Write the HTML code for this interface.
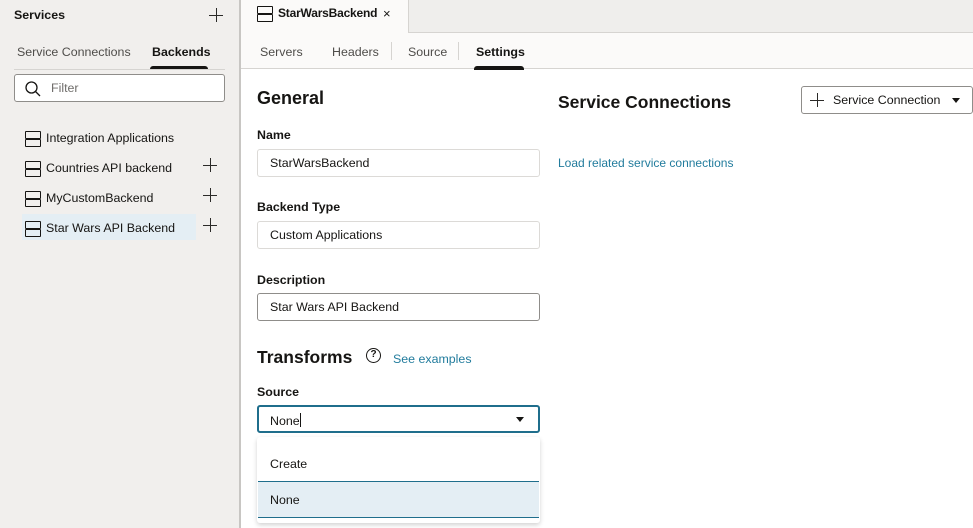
<!DOCTYPE html>
<html><head><meta charset="utf-8"><style>
*{box-sizing:border-box;margin:0;padding:0}
body{width:973px;height:528px;overflow:hidden;background:#fff;font-family:"Liberation Sans",sans-serif;color:#161513;font-size:12.4px;position:relative}
.a{position:absolute;white-space:nowrap}
.ic{position:absolute;width:14px;height:14px}
.ic:before,.ic:after{content:"";position:absolute;left:0;width:14px;height:6px;border:1.5px solid #161513;border-radius:1px}
.ic:before{top:0}.ic:after{top:8px}
.plus{position:absolute;width:14px;height:14px}
.plus:before{content:"";position:absolute;left:6.5px;top:0;width:1.2px;height:14px;background:#2b2a28}
.plus:after{content:"";position:absolute;left:0;top:6.5px;width:14px;height:1.2px;background:#2b2a28}
.lbl{font-weight:bold;font-size:12.4px}
.fld{position:absolute;left:257px;width:283px;height:28px;border:1px solid #dcdad7;border-radius:3px;padding:6px 12px;font-size:12.4px}
</style></head><body>
<div class="a" style="left:0;top:0;width:239px;height:528px;background:#f1efed"></div>
<div class="a" style="left:239px;top:0;width:2px;height:528px;background:#c8c6c3"></div>
<div class="a" style="left:14px;top:8px;font-weight:bold">Services</div>
<div class="plus" style="left:209px;top:8px"></div>
<div class="a" style="left:17px;top:45px;color:#4f4d4a">Service Connections</div>
<div class="a" style="left:152px;top:45px;font-weight:bold">Backends</div>
<div class="a" style="left:150px;top:66px;width:58px;height:4px;background:#161513;border-radius:3px 3px 0 0"></div>
<div class="a" style="left:14px;top:69px;width:211px;height:1px;background:#d6d4d1"></div>
<div class="a" style="left:14px;top:74px;width:211px;height:28px;background:#fff;border:1px solid #8f8d8a;border-radius:3px"></div>
<svg class="a" style="left:24px;top:80px" width="18" height="18" viewBox="0 0 18 18"><circle cx="7.5" cy="7.5" r="5.5" fill="none" stroke="#161513" stroke-width="1.3"/><line x1="11.5" y1="11.5" x2="16" y2="16" stroke="#161513" stroke-width="1.3"/></svg>
<div class="a" style="left:51px;top:81px;color:#6f6d6a">Filter</div>
<div class="a" style="left:22px;top:214px;width:174px;height:26px;background:#e4eef4"></div>
<div class="ic" style="left:25px;top:131px"></div><div class="a" style="left:46px;top:131px">Integration Applications</div>
<div class="ic" style="left:25px;top:161px"></div><div class="a" style="left:46px;top:161px">Countries API backend</div>
<div class="ic" style="left:25px;top:191px"></div><div class="a" style="left:46px;top:191px">MyCustomBackend</div>
<div class="ic" style="left:25px;top:221px"></div><div class="a" style="left:46px;top:221px">Star Wars API Backend</div>
<div class="plus" style="left:203px;top:158px"></div>
<div class="plus" style="left:203px;top:188px"></div>
<div class="plus" style="left:203px;top:218px"></div>
<div class="a" style="left:241px;top:0;width:732px;height:33px;background:#efeeec"></div>
<div class="a" style="left:241px;top:32px;width:732px;height:1px;background:#d6d4d1"></div>
<div class="a" style="left:241px;top:0;width:168px;height:33px;background:#fbfaf9;border-right:1px solid #d6d4d1"></div>
<div class="ic" style="left:257px;top:6px"></div>
<div class="a" style="left:278px;top:6px;font-weight:bold;font-size:12px;letter-spacing:-0.2px">StarWarsBackend</div>
<div class="a" style="left:383px;top:6px;font-size:13px">×</div>
<div class="a" style="left:241px;top:33px;width:732px;height:36px;background:#fbfaf9;border-bottom:1px solid #d6d4d1"></div>
<div class="a" style="left:260px;top:45px;color:#4f4d4a">Servers</div>
<div class="a" style="left:332px;top:45px;color:#4f4d4a">Headers</div>
<div class="a" style="left:391px;top:42px;width:1px;height:18px;background:#d6d4d1"></div>
<div class="a" style="left:408px;top:45px;color:#4f4d4a">Source</div>
<div class="a" style="left:458px;top:42px;width:1px;height:18px;background:#d6d4d1"></div>
<div class="a" style="left:476px;top:45px;font-weight:bold">Settings</div>
<div class="a" style="left:474px;top:66px;width:50px;height:4px;background:#161513;border-radius:3px 3px 0 0"></div>
<div class="a" style="left:257px;top:88px;font-size:18px;font-weight:bold">General</div>
<div class="a lbl" style="left:257px;top:128px">Name</div>
<div class="fld" style="top:149px">StarWarsBackend</div>
<div class="a lbl" style="left:257px;top:200px">Backend Type</div>
<div class="fld" style="top:221px">Custom Applications</div>
<div class="a lbl" style="left:257px;top:273px">Description</div>
<div class="fld" style="top:293px;border-color:#8f8d8a">Star Wars API Backend</div>
<div class="a" style="left:257px;top:347px;font-size:17.5px;font-weight:bold">Transforms</div>
<div class="a" style="left:366px;top:348px;width:15px;height:15px;border:1.4px solid #161513;border-radius:50%;font-size:10px;font-weight:bold;text-align:center;line-height:12px">?</div>
<div class="a" style="left:393px;top:352px;color:#227c9d">See examples</div>
<div class="a lbl" style="left:257px;top:385px">Source</div>
<div class="a" style="left:257px;top:405px;width:283px;height:28px;border:2px solid #1f6e8c;border-radius:3px;padding:6px 11px">None<span style="display:inline-block;width:1px;height:14px;background:#161513;vertical-align:-2px"></span></div>
<div class="a" style="left:516px;top:417px;width:0;height:0;border-left:4px solid transparent;border-right:4px solid transparent;border-top:5px solid #161513"></div>
<div class="a" style="left:257px;top:437px;width:283px;height:86px;background:#fff;border-radius:3px;box-shadow:0 2px 5px rgba(0,0,0,.18)"></div>
<div class="a" style="left:270px;top:457px">Create</div>
<div class="a" style="left:258px;top:481px;width:281px;height:37px;background:#e4eef4;border-top:1px solid #1f6e8c;border-bottom:1px solid #1f6e8c"></div>
<div class="a" style="left:270px;top:493px">None</div>
<div class="a" style="left:558px;top:92px;font-size:17.5px;font-weight:bold">Service Connections</div>
<div class="a" style="left:801px;top:86px;width:172px;height:28px;border:1px solid #8f8d8a;border-radius:3px"></div>
<div class="plus" style="left:810px;top:93px"></div>
<div class="a" style="left:833px;top:93px">Service Connection</div>
<div class="a" style="left:952px;top:98px;width:0;height:0;border-left:4px solid transparent;border-right:4px solid transparent;border-top:5px solid #161513"></div>
<div class="a" style="left:558px;top:156px;color:#227c9d;font-size:12px">Load related service connections</div>
</body></html>
